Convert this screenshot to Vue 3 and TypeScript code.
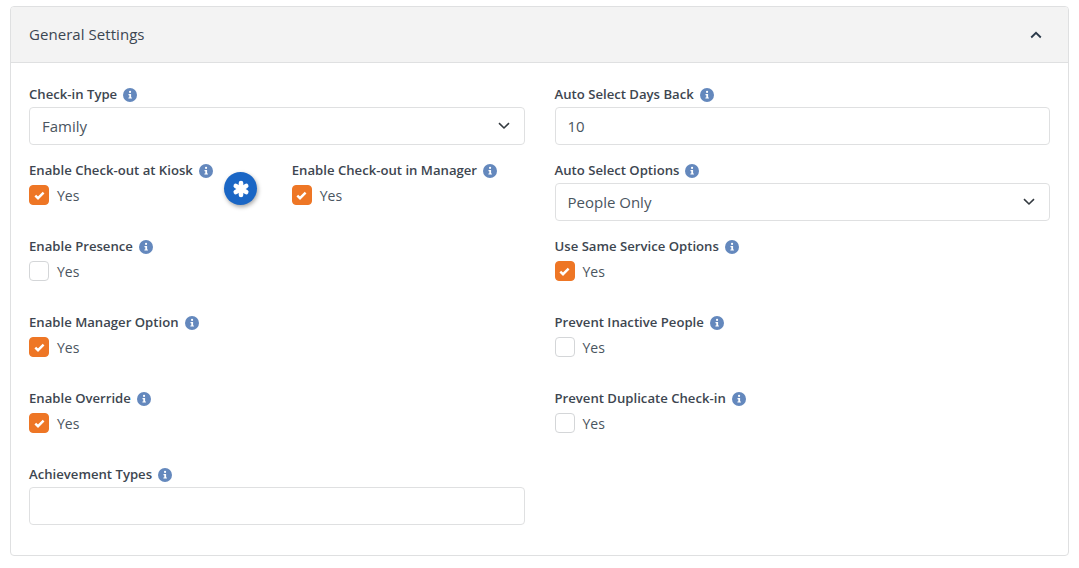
<script setup lang="ts">
type Field = { label: string; kind: 'select' | 'input' | 'check'; value?: string; checked?: boolean }

const rightFields: Field[] = [
  { label: 'Auto Select Days Back', kind: 'input', value: '10' },
  { label: 'Auto Select Options', kind: 'select', value: 'People Only' },
  { label: 'Use Same Service Options', kind: 'check', checked: true },
  { label: 'Prevent Inactive People', kind: 'check', checked: false },
  { label: 'Prevent Duplicate Check-in', kind: 'check', checked: false }
]

const checkoutFields: Field[] = [
  { label: 'Enable Check-out at Kiosk', kind: 'check', checked: true },
  { label: 'Enable Check-out in Manager', kind: 'check', checked: true }
]

const leftFields: Field[] = [
  { label: 'Enable Presence', kind: 'check', checked: false },
  { label: 'Enable Manager Option', kind: 'check', checked: true },
  { label: 'Enable Override', kind: 'check', checked: true },
  { label: 'Achievement Types', kind: 'input', value: '' }
]
</script>

<template>
  <div class="page">
    <section class="panel">
      <header class="panel-heading">
        <h3>General Settings</h3>
        <svg class="chevron-up" width="12" height="8" viewBox="0 0 12 8">
          <path d="M1.2 6.5 6 1.9l4.8 4.6" fill="none" stroke="#2b3a4a" stroke-width="1.9" />
        </svg>
      </header>
      <div class="panel-body">
        <div class="col">
          <div class="form-group">
            <label class="control-label">
              Check-in Type
              <svg class="info" width="14" height="14" viewBox="0 0 14 14">
                <circle cx="7" cy="7" r="7" fill="#6488bd" />
                <rect x="6" y="2.8" width="2.1" height="2.1" rx="1" fill="#fff" />
                <path d="M5.5 6h2.6v3.4h.8v1.2H5.4V9.4h.9V7.2h-.8z" fill="#fff" />
              </svg>
            </label>
            <div class="form-control select">
              <span>Family</span>
              <svg width="12" height="8" viewBox="0 0 12 8">
                <path d="M1 1.2 6 6l5-4.8" fill="none" stroke="#343a40" stroke-width="1.6" />
              </svg>
            </div>
          </div>

          <div class="sub-row">
            <div v-for="f in checkoutFields" :key="f.label" class="form-group">
              <label class="control-label">
                {{ f.label }}
                <svg class="info" width="14" height="14" viewBox="0 0 14 14">
                  <circle cx="7" cy="7" r="7" fill="#6488bd" />
                  <rect x="6" y="2.8" width="2.1" height="2.1" rx="1" fill="#fff" />
                  <path d="M5.5 6h2.6v3.4h.8v1.2H5.4V9.4h.9V7.2h-.8z" fill="#fff" />
                </svg>
              </label>
              <div class="check-row">
                <span class="box" :class="{ on: f.checked }">
                  <svg v-if="f.checked" width="11" height="9" viewBox="0 0 11 9">
                    <path d="M1.3 4.6 4 7.2l5.6-5.6" fill="none" stroke="#fff" stroke-width="2.4" />
                  </svg>
                </span>
                <span>Yes</span>
              </div>
            </div>
            <button class="fab" type="button" aria-label="Edit">
              <svg width="18" height="18" viewBox="0 0 18 18">
                <g stroke="#fff" stroke-width="4.6" stroke-linecap="round">
                  <path d="M9 3v12" />
                  <path d="M3.8 6l10.4 6" />
                  <path d="M14.2 6 3.8 12" />
                </g>
              </svg>
            </button>
          </div>

          <div v-for="f in leftFields" :key="f.label" class="form-group">
            <label class="control-label">
              {{ f.label }}
              <svg class="info" width="14" height="14" viewBox="0 0 14 14">
                <circle cx="7" cy="7" r="7" fill="#6488bd" />
                <rect x="6" y="2.8" width="2.1" height="2.1" rx="1" fill="#fff" />
                <path d="M5.5 6h2.6v3.4h.8v1.2H5.4V9.4h.9V7.2h-.8z" fill="#fff" />
              </svg>
            </label>
            <div v-if="f.kind === 'input'" class="form-control">{{ f.value }}</div>
            <div v-else class="check-row">
              <span class="box" :class="{ on: f.checked }">
                <svg v-if="f.checked" width="11" height="9" viewBox="0 0 11 9">
                  <path d="M1.3 4.6 4 7.2l5.6-5.6" fill="none" stroke="#fff" stroke-width="2.4" />
                </svg>
              </span>
              <span>Yes</span>
            </div>
          </div>
        </div>

        <div class="col">
          <div v-for="f in rightFields" :key="f.label" class="form-group">
            <label class="control-label">
              {{ f.label }}
              <svg class="info" width="14" height="14" viewBox="0 0 14 14">
                <circle cx="7" cy="7" r="7" fill="#6488bd" />
                <rect x="6" y="2.8" width="2.1" height="2.1" rx="1" fill="#fff" />
                <path d="M5.5 6h2.6v3.4h.8v1.2H5.4V9.4h.9V7.2h-.8z" fill="#fff" />
              </svg>
            </label>
            <div v-if="f.kind === 'input'" class="form-control">{{ f.value }}</div>
            <div v-else-if="f.kind === 'select'" class="form-control select">
              <span>{{ f.value }}</span>
              <svg width="12" height="8" viewBox="0 0 12 8">
                <path d="M1 1.2 6 6l5-4.8" fill="none" stroke="#343a40" stroke-width="1.6" />
              </svg>
            </div>
            <div v-else class="check-row">
              <span class="box" :class="{ on: f.checked }">
                <svg v-if="f.checked" width="11" height="9" viewBox="0 0 11 9">
                  <path d="M1.3 4.6 4 7.2l5.6-5.6" fill="none" stroke="#fff" stroke-width="2.4" />
                </svg>
              </span>
              <span>Yes</span>
            </div>
          </div>
        </div>
      </div>
    </section>
  </div>
</template>

<style scoped>
.page {
  padding: 6px 10px 0;
  font-family: "Open Sans", sans-serif;
  color: #343a40;
}

.panel {
  border: 1px solid #dfe0e1;
  border-radius: 4px;
  height: 550px;
  box-sizing: border-box;
  overflow: hidden;
}

.panel-heading {
  display: flex;
  align-items: center;
  justify-content: space-between;
  height: 56px;
  box-sizing: border-box;
  padding: 0 26px 2px 18px;
  background: #f3f3f3;
  border-bottom: 1px solid #dfe0e1;
}

.panel-heading h3 {
  margin: 0;
  font-size: 15px;
  font-weight: 400;
  letter-spacing: 0.05px;
  color: #3b4652;
}

.chevron-up {
  margin-top: 2px;
}

.panel-body {
  display: grid;
  grid-template-columns: 1fr 1fr;
  column-gap: 30px;
  padding: 22px 18px 0;
}

.form-group {
  height: 76px;
}

.control-label {
  display: flex;
  align-items: center;
  gap: 6px;
  height: 19px;
  margin-bottom: 3px;
  font-size: 13.15px;
  font-weight: 600;
  line-height: 19px;
  color: #3d4650;
}

.info {
  flex: none;
}

.form-control {
  display: flex;
  align-items: center;
  justify-content: space-between;
  height: 38px;
  box-sizing: border-box;
  padding: 0 14px 0 12px;
  border: 1px solid #dfe0e1;
  border-radius: 4px;
  font-size: 15px;
  color: #4a5560;
  background: #fff;
}

.sub-row {
  position: relative;
  display: grid;
  grid-template-columns: 1fr 1fr;
  column-gap: 30px;
}

.check-row {
  display: flex;
  align-items: center;
  gap: 8px;
  height: 20px;
  margin-top: 5px;
  font-size: 14px;
  color: #4a5560;
}

.box {
  display: flex;
  align-items: center;
  justify-content: center;
  width: 20px;
  height: 20px;
  box-sizing: border-box;
  border: 1px solid #d4d6d8;
  border-radius: 4px;
  background: #fff;
}

.box.on {
  border-color: #ee7625;
  background: #ee7625;
}

.fab {
  position: absolute;
  left: 195px;
  top: 11px;
  display: flex;
  align-items: center;
  justify-content: center;
  width: 33px;
  height: 33px;
  padding: 0;
  border: none;
  border-radius: 50%;
  background: #1a66c5;
  box-shadow: 1px 2px 4px rgba(0, 0, 0, 0.35);
}
</style>

<style>
html,
body {
  background: #fff;
}
</style>
